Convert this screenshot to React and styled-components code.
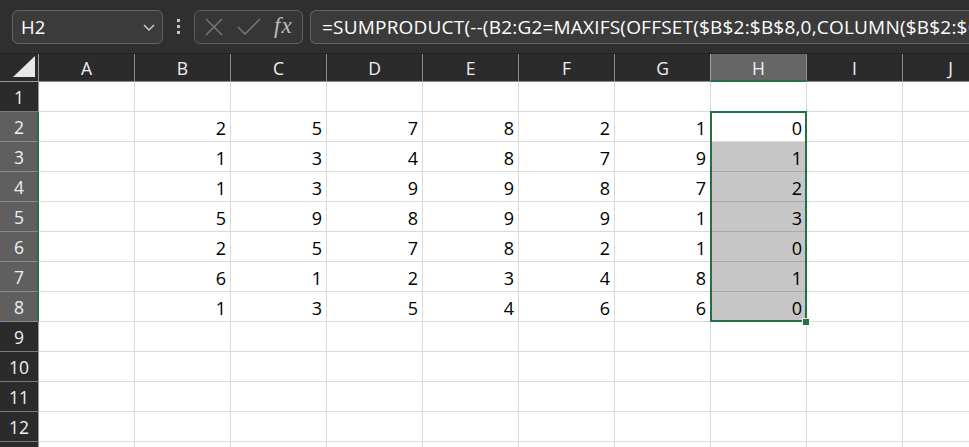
import React from "react";
import styled, { createGlobalStyle } from "styled-components";

const Global = createGlobalStyle`
  html, body { margin: 0; padding: 0; background: #ffffff; overflow: hidden; }
  body { font-family: "Open Sans", "Noto Sans", sans-serif; }
`;

const Page = styled.div`
  width: 969px;
  height: 447px;
  overflow: hidden;
  display: flex;
  flex-direction: column;
`;

const TopBar = styled.div`
  height: 53px;
  flex: 0 0 53px;
  background: #2f2f2f;
  border-bottom: 1px solid #222222;
  display: flex;
  align-items: center;
  padding-left: 12px;
  box-sizing: content-box;
`;

const NameBox = styled.div`
  width: 151px;
  height: 34px;
  box-sizing: border-box;
  border: 1px solid #636363;
  border-radius: 6px;
  background: #3b3b3b;
  display: flex;
  align-items: center;
  justify-content: space-between;
  padding: 0 6px 0 8px;
  color: #ffffff;
  font-size: 18.5px;
`;

const Dots = styled.div`
  width: 31px;
  display: flex;
  flex-direction: column;
  align-items: center;
  gap: 3px;
  span {
    width: 3px;
    height: 3px;
    background: #c4c4c4;
  }
`;

const FxBox = styled.div`
  width: 109px;
  height: 34px;
  box-sizing: border-box;
  border: 1px solid #5e5e5e;
  border-radius: 6px;
  background: #363636;
  display: flex;
  align-items: center;
  padding-left: 9px;
  gap: 13px;
`;

const FxText = styled.span`
  font-family: "Liberation Serif", "DejaVu Serif", serif;
  font-style: italic;
  font-size: 23px;
  color: #bdbdbd;
  letter-spacing: 1px;
  line-height: 1;
  position: relative;
  top: -1px;
`;

const FormulaInput = styled.div`
  margin-left: 7px;
  flex: 1;
  height: 34px;
  box-sizing: border-box;
  border: 1px solid #636363;
  border-right: none;
  border-radius: 6px 0 0 6px;
  background: #3b3b3b;
  color: #ffffff;
  font-size: 19px;
  letter-spacing: 0.2px;
  display: flex;
  align-items: center;
  padding-left: 11px;
  white-space: nowrap;
  overflow: hidden;
`;

const SheetWrap = styled.div`
  position: relative;
  flex: 1;
  overflow: hidden;
`;

const Grid = styled.div`
  display: grid;
  grid-template-columns: 39px repeat(10, 96px);
  grid-template-rows: 28px repeat(13, 30px);
  width: 999px;
`;

const Corner = styled.div`
  background: #2b2b2b;
  border-right: 1px solid #9a9a9a;
  border-bottom: 1px solid #9a9a9a;
  box-sizing: border-box;
  display: flex;
  align-items: flex-end;
  justify-content: flex-end;
  padding: 0 3px 4px 0;
`;

const ColHead = styled.div`
  background: ${(p) => (p.$sel ? "#666666" : "#2b2b2b")};
  color: #f0f0f0;
  font-size: 17.5px;
  display: flex;
  align-items: center;
  justify-content: center;
  box-sizing: border-box;
  border-right: 1px solid #8c8c8c;
  border-bottom: ${(p) => (p.$sel ? "2px solid #217346" : "1px solid #8c8c8c")};
  ${(p) => (p.$sel ? "border-left: 1px solid #a0a0a0; margin-left: -1px;" : "")}
  padding-top: ${(p) => (p.$sel ? "1px" : "0")};
`;

const RowHead = styled.div`
  background: ${(p) => (p.$sel ? "#5f5f5f" : "#2b2b2b")};
  color: #f0f0f0;
  font-size: 17.5px;
  display: flex;
  align-items: center;
  justify-content: center;
  box-sizing: border-box;
  border-bottom: 1px solid ${(p) => (p.$sel ? "#8a8a8a" : "#7a7a7a")};
  border-right: ${(p) => (p.$sel ? "2px solid #217346" : "1px solid #9a9a9a")};
  padding-left: ${(p) => (p.$sel ? "1px" : "0")};
`;

const Cell = styled.div`
  background: ${(p) => (p.$sel ? "#c6c6c6" : "#ffffff")};
  border-right: 1px solid #dadada;
  border-bottom: 1px solid ${(p) => (p.$sel ? "#a9a9a9" : "#dadada")};
  box-sizing: border-box;
  font-size: 18px;
  color: #000000;
  display: flex;
  align-items: center;
  justify-content: flex-end;
  padding: 2px 4px 0 0;
`;

const Selection = styled.div`
  position: absolute;
  left: 710px;
  top: 57px;
  width: 97px;
  height: 211px;
  border: 2px solid #217346;
  box-sizing: border-box;
  pointer-events: none;
`;

const Handle = styled.div`
  position: absolute;
  left: 803px;
  top: 265px;
  width: 6px;
  height: 6px;
  background: #217346;
  border: 1px solid #ffffff;
  margin: -1px 0 0 -1px;
`;

const cols = ["A", "B", "C", "D", "E", "F", "G", "H", "I", "J"];
const data = [
  [2, 5, 7, 8, 2, 1, 0],
  [1, 3, 4, 8, 7, 9, 1],
  [1, 3, 9, 9, 8, 7, 2],
  [5, 9, 8, 9, 9, 1, 3],
  [2, 5, 7, 8, 2, 1, 0],
  [6, 1, 2, 3, 4, 8, 1],
  [1, 3, 5, 4, 6, 6, 0],
];

const Chevron = () => (
  <svg width="14" height="14" viewBox="0 0 14 14">
    <path d="M2 5 L7 10 L12 5" fill="none" stroke="#d0d0d0" strokeWidth="1.4" />
  </svg>
);

const XIcon = () => (
  <svg width="20" height="20" viewBox="0 0 20 20">
    <path d="M2 2 L18 18 M18 2 L2 18" stroke="#7c7c7c" strokeWidth="1.4" fill="none" />
  </svg>
);

const CheckIcon = () => (
  <svg width="24" height="20" viewBox="0 0 24 20">
    <path d="M1 10 L8 17 L23 2" stroke="#7c7c7c" strokeWidth="1.4" fill="none" />
  </svg>
);

const Triangle = () => (
  <svg width="22" height="21" viewBox="0 0 22 21">
    <path d="M22 0 L22 21 L0 21 Z" fill="#e8e8e8" />
  </svg>
);

export default function App() {
  const rows = [];
  for (let r = 1; r <= 13; r++) {
    const rowSel = r >= 2 && r <= 8;
    rows.push(
      <RowHead key={`rh${r}`} $sel={rowSel}>
        {r}
      </RowHead>
    );
    cols.forEach((c, ci) => {
      let val = "";
      if (rowSel && ci >= 1 && ci <= 7) val = data[r - 2][ci - 1];
      const sel = c === "H" && r >= 3 && r <= 8;
      rows.push(
        <Cell key={`${c}${r}`} $sel={sel}>
          {val}
        </Cell>
      );
    });
  }

  return (
    <Page>
      <Global />
      <TopBar>
        <NameBox>
          <span>H2</span>
          <Chevron />
        </NameBox>
        <Dots>
          <span />
          <span />
          <span />
        </Dots>
        <FxBox>
          <XIcon />
          <CheckIcon />
          <FxText>fx</FxText>
        </FxBox>
        <FormulaInput>
          =SUMPRODUCT(--(B2:G2=MAXIFS(OFFSET($B$2:$B$8,0,COLUMN($B$2:$G$2)-COLUMN($B$2)),$B$2:$B$8,"&lt;&gt;")))
        </FormulaInput>
      </TopBar>
      <SheetWrap>
        <Grid>
          <Corner>
            <Triangle />
          </Corner>
          {cols.map((c) => (
            <ColHead key={c} $sel={c === "H"}>
              {c}
            </ColHead>
          ))}
          {rows}
        </Grid>
        <Selection />
        <Handle />
      </SheetWrap>
    </Page>
  );
}
